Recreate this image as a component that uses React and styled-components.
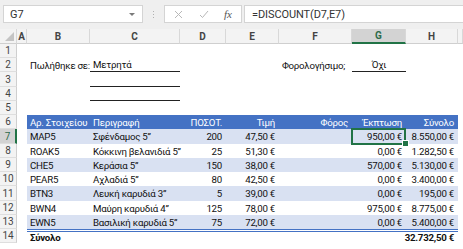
import React from "react";
import styled, { createGlobalStyle, css } from "styled-components";

const Global = createGlobalStyle`
  html, body { margin: 0; padding: 0; background: #ffffff; }
  body { font-family: Roboto, "Noto Sans", sans-serif; }
`;

const COLS = "17px 10px 63px 90px 46px 53px 73px 54px 52px 5px";
const ROW_H = [14, 14, 15, 14, 14, 14, 15, 14, 14, 14, 15, 14, 14, 14];

const Page = styled.div`
  width: 463px;
  height: 249px;
  overflow: hidden;
  background: #fff;
`;

const FormulaBar = styled.div`
  height: 29px;
  background: #efefef;
  display: flex;
  align-items: flex-start;
  padding: 5px 0 0 3px;
  box-sizing: border-box;
`;

const Box = styled.div`
  height: 18px;
  background: #fff;
  border: 1px solid #d4d4d4;
  box-sizing: border-box;
  display: flex;
  align-items: center;
  font-size: 11px;
  color: #333;
`;

const NameBox = styled(Box)`
  width: 140px;
  padding: 0 6px;
  justify-content: space-between;
`;

const Caret = styled.span`
  width: 0;
  height: 0;
  border-left: 3px solid transparent;
  border-right: 3px solid transparent;
  border-top: 3px solid #7a7a7a;
  margin-right: 1px;
`;

const Dots = styled.div`
  width: 21px;
  height: 18px;
  display: flex;
  flex-direction: column;
  align-items: center;
  justify-content: center;
  gap: 2px;
`;

const Dot = styled.span`
  width: 1px;
  height: 1px;
  background: #b0b0b0;
`;

const FxBox = styled(Box)`
  width: 78px;
  justify-content: space-between;
  padding: 0 9px 0 9px;
  color: #b5b5b5;
`;

const Fx = styled.span`
  font-family: "Liberation Serif", "DejaVu Serif", serif;
  font-style: italic;
  font-size: 11px;
  color: #555;
`;

const FormulaInput = styled(Box)`
  flex: 1;
  margin-left: 2px;
  padding-left: 7px;
  border-right: none;
  letter-spacing: -0.1px;
`;

const Sheet = styled.div`
  display: grid;
  grid-template-columns: ${COLS};
  grid-template-rows: 15px ${ROW_H.map((h) => h + "px").join(" ")};
`;

const ColHead = styled.div`
  background: ${(p) => (p.$sel ? "#d3d3d3" : "#f3f3f3")};
  border-bottom: ${(p) => (p.$sel ? "2px solid #217346" : "1px solid #cfcfcf")};
  border-right: 1px solid #d8d8d8;
  box-sizing: border-box;
  display: flex;
  align-items: center;
  justify-content: center;
  font-size: 10px;
  font-weight: 700;
  color: ${(p) => (p.$sel ? "#2d6b4a" : "#444")};
`;

const Corner = styled(ColHead)`
  position: relative;
  &::after {
    content: "";
    position: absolute;
    right: 2px;
    bottom: 2px;
    width: 0;
    height: 0;
    border-left: 9px solid transparent;
    border-bottom: 9px solid #c4c4c4;
  }
`;

const RowHead = styled.div`
  background: ${(p) => (p.$sel ? "#d3d3d3" : "#f3f3f3")};
  border-right: ${(p) => (p.$sel ? "2px solid #217346" : "1px solid #cfcfcf")};
  border-bottom: 1px solid #dedede;
  box-sizing: border-box;
  display: flex;
  align-items: center;
  justify-content: center;
  font-size: 10px;
  color: ${(p) => (p.$sel ? "#2d6b4a" : "#444")};
`;

const Cell = styled.div`
  box-sizing: border-box;
  display: flex;
  align-items: center;
  justify-content: ${(p) => (p.$right ? "flex-end" : "flex-start")};
  padding: ${(p) => (p.$right ? "0 4px 0 0" : "0 0 0 3px")};
  font-size: 9.7px;
  letter-spacing: -0.25px;
  color: #111;
  white-space: nowrap;
  overflow: visible;
  background: ${(p) =>
    p.$head ? "#4472c4" : p.$band ? "#d9e1f2" : "transparent"};
  ${(p) => p.$head && css`color: #fff;`}
  ${(p) => p.$bold && css`font-weight: 700;`}
  ${(p) => p.$under && css`border-bottom: 1px solid #222;`}
  ${(p) => p.$total && css`border-top: 3px double #4472c4;`}
  ${(p) => p.$center && css`justify-content: center; padding: 0;`}
`;

const SelCell = styled(Cell)`
  position: relative;
  &::before {
    content: "";
    position: absolute;
    inset: -1px 0 -1px -1px;
    border: 2px solid #217346;
    pointer-events: none;
  }
  &::after {
    content: "";
    position: absolute;
    right: -3px;
    bottom: -3px;
    width: 5px;
    height: 5px;
    background: #217346;
    border: 1px solid #fff;
  }
`;

const letters = ["A", "B", "C", "D", "E", "F", "G", "H"];

const items = [
  ["MAP5", "Σφένδαμος 5\u201D", "200", "47,50 €", "950,00 €", "8.550,00 €"],
  ["ROAK5", "Κόκκινη βελανιδιά 5\u201D", "25", "51,30 €", "0,00 €", "1.282,50 €"],
  ["CHE5", "Κεράσια 5\u201D", "150", "38,00 €", "570,00 €", "5.130,00 €"],
  ["PEAR5", "Αχλαδιά 5\u201D", "80", "42,50 €", "0,00 €", "3.400,00 €"],
  ["BTN3", "Λευκή καρυδιά 3\u201D", "5", "39,00 €", "0,00 €", "195,00 €"],
  ["BWN4", "Μαύρη καρυδιά 4\u201D", "125", "78,00 €", "975,00 €", "8.775,00 €"],
  ["EWN5", "Βασιλική καρυδιά 5\u201D", "75", "72,00 €", "0,00 €", "5.400,00 €"],
];

function Blank({ n, ...rest }) {
  return Array.from({ length: n }).map((_, i) => <Cell key={i} {...rest} />);
}

export default function App() {
  const rows = [];
  rows.push(
    <React.Fragment key="r1">
      <RowHead>1</RowHead>
      <Blank n={9} />
    </React.Fragment>
  );
  rows.push(
    <React.Fragment key="r2">
      <RowHead>2</RowHead>
      <Cell />
      <Cell>Πωλήθηκε σε:</Cell>
      <Cell $under>Μετρητά</Cell>
      <Cell />
      <Cell />
      <Cell $right style={{ paddingRight: 7 }}>Φορολογήσιμο;</Cell>
      <Cell $under $center>Όχι</Cell>
      <Cell />
      <Cell />
    </React.Fragment>
  );
  [3, 4].forEach((r) =>
    rows.push(
      <React.Fragment key={"r" + r}>
        <RowHead>{r}</RowHead>
        <Cell />
        <Cell />
        <Cell $under />
        <Blank n={6} />
      </React.Fragment>
    )
  );
  rows.push(
    <React.Fragment key="r5">
      <RowHead>5</RowHead>
      <Blank n={9} />
    </React.Fragment>
  );
  rows.push(
    <React.Fragment key="r6">
      <RowHead>6</RowHead>
      <Cell />
      <Cell $head>Αρ. Στοιχείου</Cell>
      <Cell $head>Περιγραφή</Cell>
      <Cell $head $right>ΠΟΣΟΤ.</Cell>
      <Cell $head $right>Τιμή</Cell>
      <Cell $head $right>Φόρος</Cell>
      <Cell $head $right>Έκπτωση</Cell>
      <Cell $head $right>Σύνολο</Cell>
      <Cell />
    </React.Fragment>
  );
  items.forEach((it, i) => {
    const r = 7 + i;
    const band = i % 2 === 0;
    const G = r === 7 ? SelCell : Cell;
    rows.push(
      <React.Fragment key={"r" + r}>
        <RowHead $sel={r === 7}>{r}</RowHead>
        <Cell />
        <Cell $band={band}>{it[0]}</Cell>
        <Cell $band={band}>{it[1]}</Cell>
        <Cell $band={band} $right>{it[2]}</Cell>
        <Cell $band={band} $right>{it[3]}</Cell>
        <Cell $band={band} />
        <G $band={band} $right>{it[4]}</G>
        <Cell $band={band} $right>{it[5]}</Cell>
        <Cell />
      </React.Fragment>
    );
  });
  rows.push(
    <React.Fragment key="r14">
      <RowHead>14</RowHead>
      <Cell />
      <Cell $total $bold>Σύνολο</Cell>
      <Cell $total />
      <Cell $total />
      <Cell $total />
      <Cell $total />
      <Cell $total />
      <Cell $total $bold $right>32.732,50 €</Cell>
      <Cell />
    </React.Fragment>
  );

  return (
    <Page>
      <Global />
      <FormulaBar>
        <NameBox>
          <span>G7</span>
          <Caret />
        </NameBox>
        <Dots>
          <Dot />
          <Dot />
          <Dot />
        </Dots>
        <FxBox>
          <svg width="9" height="9" viewBox="0 0 9 9">
            <path d="M1 1L8 8M8 1L1 8" stroke="#b8b8b8" strokeWidth="1" />
          </svg>
          <svg width="10" height="9" viewBox="0 0 10 9">
            <path d="M1 5L3.5 7.5L9 1" stroke="#b8b8b8" strokeWidth="1" fill="none" />
          </svg>
          <Fx>fx</Fx>
        </FxBox>
        <FormulaInput>=DISCOUNT(D7,E7)</FormulaInput>
      </FormulaBar>
      <Sheet>
        <Corner />
        {letters.map((l) => (
          <ColHead key={l} $sel={l === "G"}>
            {l}
          </ColHead>
        ))}
        <ColHead />
        {rows}
      </Sheet>
    </Page>
  );
}
